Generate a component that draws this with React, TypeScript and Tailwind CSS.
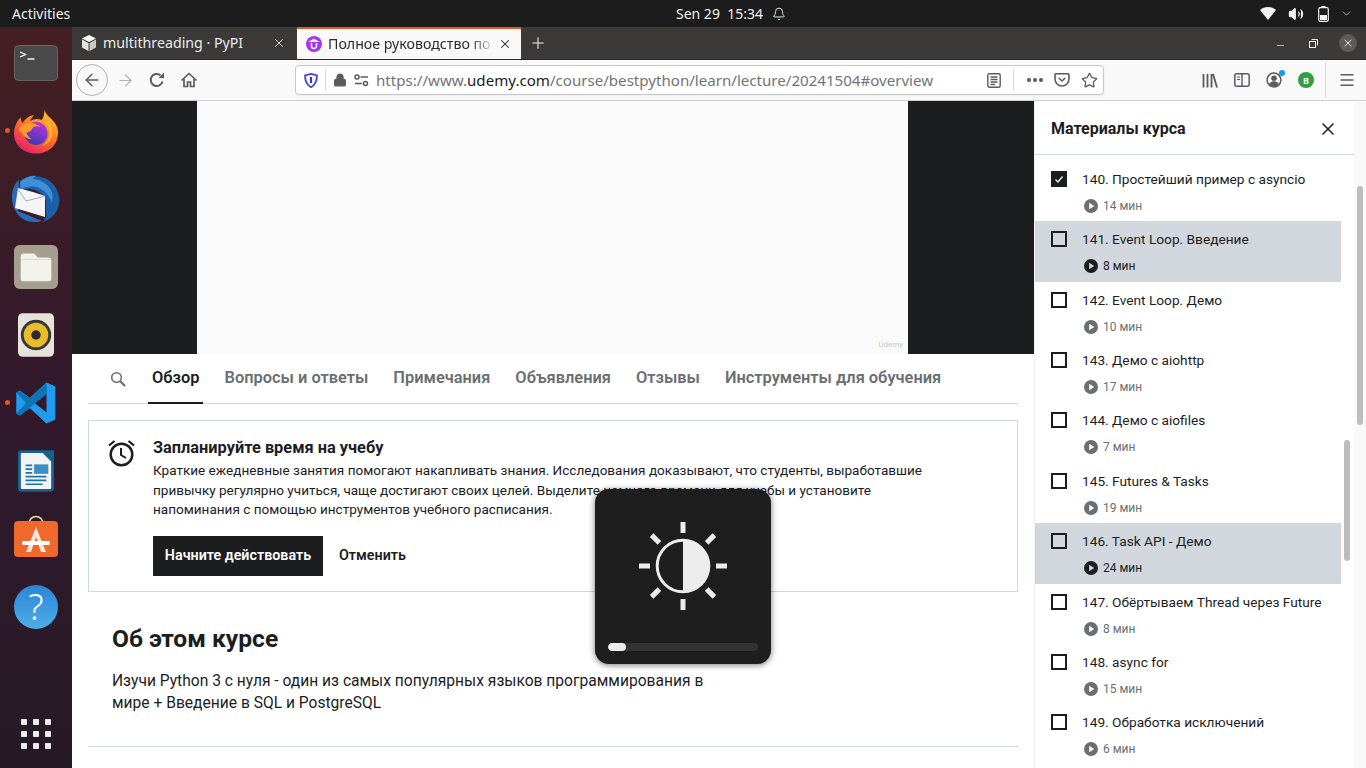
import * as React from 'react';
import { ArrowLeft, ArrowRight, Lock, Plus, X, Star, Menu, Bell, Volume2, ChevronDown, Minus } from 'lucide-react';

const lectures = [
  { title: '140. Простейший пример с asyncio', time: '14 мин', done: true },
  { title: '141. Event Loop. Введение', time: '8 мин', active: true },
  { title: '142. Event Loop. Демо', time: '10 мин' },
  { title: '143. Демо с aiohttp', time: '17 мин' },
  { title: '144. Демо с aiofiles', time: '7 мин' },
  { title: '145. Futures & Tasks', time: '19 мин' },
  { title: '146. Task API - Демо', time: '24 мин', active: true },
  { title: '147. Обёртываем Thread через Future', time: '8 мин' },
  { title: '148. async for', time: '15 мин' },
  { title: '149. Обработка исключений', time: '6 мин' },
];

const tabs = ['Обзор', 'Вопросы и ответы', 'Примечания', 'Объявления', 'Отзывы', 'Инструменты для обучения'];

const PlayDot: React.FC<{ active?: boolean }> = ({ active }) => (
  <svg width="14" height="14" viewBox="0 0 14 14" className="ml-[2px]">
    <circle cx="7" cy="7" r="7" fill={active ? '#1c1d1f' : '#6a6f73'} />
    <path d="M5.2 3.8 10.2 7 5.2 10.2Z" fill={active ? '#d1d7dc' : '#fff'} />
  </svg>
);

const LectureRow: React.FC<{ title: string; time: string; done?: boolean; active?: boolean }> = ({ title, time, done, active }) => (
  <div className={`h-[60.36px] w-[306px] pl-4 pr-2 flex gap-[15px] ${active ? 'bg-[#d1d7dc]' : ''}`}>
    <div className={`mt-[10px] w-4 h-4 shrink-0 border-2 border-[#1c1d1f] flex items-center justify-center ${done ? 'bg-[#1c1d1f]' : ''}`}>
      {done && (
        <svg width="10" height="10" viewBox="0 0 10 10" fill="none" stroke="#fff" strokeWidth="1.2">
          <path d="M1.5 5.5 4 8 8.5 2.5" />
        </svg>
      )}
    </div>
    <div>
      <div className="mt-[8px] text-[13.7px] leading-[20px] text-[#1c1d1f] whitespace-nowrap">{title}</div>
      <div className={`mt-[9px] flex items-center gap-[5px] text-[12px] leading-[16px] ${active ? 'text-[#1c1d1f]' : 'text-[#6a6f73]'}`}>
        <PlayDot active={active} />
        {time}
      </div>
    </div>
  </div>
);

const DockSlot: React.FC<{ dot?: boolean; children: React.ReactNode }> = ({ dot, children }) => (
  <div className="relative w-[72px] h-[68px] shrink-0 flex items-center justify-center">
    {dot && <div className="absolute left-[5px] top-1/2 -mt-[3px] w-[5px] h-[5px] rounded-full bg-[#e95420]" />}
    {children}
  </div>
);

const Dock: React.FC = () => (
  <aside className="w-[72px] shrink-0 flex flex-col items-center bg-gradient-to-b from-[#451f22] via-[#32192c] to-[#261a26]">
    <div className="h-[2px]" />
    <DockSlot>
      <svg width="44" height="36" viewBox="0 0 44 36">
        <rect x="0.5" y="0.5" width="43" height="35" rx="4" fill="#4a4a4a" stroke="#666" />
        <path d="M6 7 11.5 9.5 6 12" fill="none" stroke="#fff" strokeWidth="1.3" />
        <path d="M13.5 14H20.5" stroke="#fff" strokeWidth="1.4" />
      </svg>
    </DockSlot>
    <DockSlot dot>
      <svg width="46" height="47" viewBox="0 0 48 48">
        <defs>
          <linearGradient id="fx1" x1="0.8" y1="0" x2="0.2" y2="1">
            <stop offset="0" stopColor="#ffd02e" />
            <stop offset="0.45" stopColor="#ff7a1f" />
            <stop offset="1" stopColor="#e3176e" />
          </linearGradient>
          <linearGradient id="fx2" x1="0.7" y1="0" x2="0.3" y2="1">
            <stop offset="0" stopColor="#b833e1" />
            <stop offset="1" stopColor="#3a3bb3" />
          </linearGradient>
        </defs>
        <path d="M33 1c1 5 4 7 7 10 5 5 7 9 7 14 0 13-10 22-23 22S1 38 1 26C1 18 5 12 8 9c0 3 1 5 2 6 3-5 8-8 12-8-3 3-4 5-4 6 3-2 8-3 12-1 2-3 3-7 3-12Z" fill="url(#fx1)" />
        <circle cx="24" cy="26" r="12" fill="url(#fx2)" />
        <path d="M6 21c4-5 10-7 14-6 5 1 9 4 9 4-3-1-8-1-9 2-1 2-4 4-6 4 1 3 3 6 6 7-6 0-11-5-14-11Z" fill="#ff9a2a" />
        <path d="M31 13c5 3 8 9 7 15-1 5-4 9-8 11 6-1 11-7 11-14 0-5-2-9-4-11Z" fill="#ffb52e" />
      </svg>
    </DockSlot>
    <DockSlot>
      <svg width="48" height="48" viewBox="0 0 48 48">
        <path d="M8 6C16-1 33-1 42 10c8 10 7 27-5 34-2 1-4 2-6 3 5-6 6-18 1-25C26 14 16 12 9 16 7 13 7 9 8 6Z" fill="#1d5fa8" />
        <path d="M9 6c5-4 11-6 15-5-2 1-3 2-3 3 6 0 14 4 18 11 2 5 2 9 1 13-2-7-7-12-13-15-5-2-12-2-17 1-2-2-2-5-1-8Z" fill="#3f8fdb" />
        <path d="M0 22C0 14 3 8 7 5c-1 6 0 11 2 14L6 36l24 10c-3 1-5 1-8 1C9 47 0 36 0 22Z" fill="#2a6cbc" />
        <path d="M6 13 21 17 33 21 33 42 3 33Z" fill="#f5f5f8" />
        <path d="M6 14 14 26 33 21" fill="none" stroke="#9aa3ad" strokeWidth="0.9" />
        <path d="M34 25l5-1-3 4 5 0-4 4 4 1-5 3 2 2-4 2Z" fill="#1d5fa8" />
      </svg>
    </DockSlot>
    <DockSlot>
      <svg width="44" height="44" viewBox="0 0 46 46">
        <rect width="46" height="46" rx="6" fill="#a59e8e" />
        <path d="M7 12a3 3 0 0 1 3-3h11l4 4h11a3 3 0 0 1 3 3v19a3 3 0 0 1-3 3H10a3 3 0 0 1-3-3Z" fill="#f3f1ec" />
        <path d="M7 15h32" stroke="#d8d4ca" strokeWidth="1" />
      </svg>
    </DockSlot>
    <DockSlot>
      <svg width="36" height="44" viewBox="0 0 38 46">
        <rect width="38" height="46" rx="5" fill="#e6e3da" />
        <circle cx="19" cy="23" r="16" fill="#37373a" />
        <circle cx="19" cy="23" r="13" fill="#e9bd27" />
        <circle cx="19" cy="23" r="5" fill="#2b2b2d" />
      </svg>
    </DockSlot>
    <DockSlot dot>
      <svg width="42" height="42" viewBox="0 0 100 100">
        <path d="M96 11 75 1 35 38 12 20 3 25v50l9 5 23-18 40 37 21-10ZM75 28v44L46 50Z" fill="#1f9cf0" />
        <path d="M3 25 12 20 35 38 75 1 76 28 12 80 3 75 26 50Z" fill="#0f73b8" />
      </svg>
    </DockSlot>
    <DockSlot>
      <svg width="36" height="44" viewBox="0 0 38 46">
        <path d="M3 1h24l11 11v29a4 4 0 0 1-4 4H4a4 4 0 0 1-4-4V4a3 3 0 0 1 3-3Z" fill="#19618f" />
        <path d="M4 4h22l9 9v28a1 1 0 0 1-1 1H4a1 1 0 0 1-1-1V5a1 1 0 0 1 1-1Z" fill="#f4f4f4" />
        <path d="M27 1 38 1V12Z" fill="#19618f" />
        <rect x="17" y="16" width="15" height="10" fill="#3b8ec4" />
        <path d="M8 17h7M8 21h7M8 25h7M8 29h22M8 33h22M8 37h18" stroke="#1a75a8" strokeWidth="1.8" />
      </svg>
    </DockSlot>
    <DockSlot>
      <svg width="44" height="43" viewBox="0 0 44 43" className="-mt-[5px]">
        <path d="M15 9c0-10 14-10 14 0" fill="none" stroke="#f7d3a8" strokeWidth="1.6" />
        <rect y="6" width="44" height="36" rx="4" fill="#f0682c" />
        <path d="M22 12 32 37h-5l-5-15-5 15h-5Z" fill="#fde5d8" />
        <rect x="8" y="26" width="28" height="4" rx="1.5" fill="#fff" />
      </svg>
    </DockSlot>
    <DockSlot>
      <div className="w-[44px] h-[44px] rounded-full bg-gradient-to-b from-[#2a86d8] to-[#4eaee8] flex items-center justify-center text-white text-[36px] leading-none font-light font-['Noto_Sans',sans-serif]">?</div>
    </DockSlot>
    <div className="flex-1" />
    <div className="mb-[19px] grid grid-cols-3 gap-[6px]">
      {Array.from({ length: 9 }).map((_, i) => (
        <div key={i} className="w-[6px] h-[6px] rounded-[1px] bg-[#ececec]" />
      ))}
    </div>
  </aside>
);

const TopBar: React.FC = () => (
  <header className="h-[27px] shrink-0 bg-[#1c1c1c] text-[#f0f0f0] flex items-center pl-3 pr-[13px] text-[14px] font-['Noto_Sans',sans-serif]">
    <span className="w-[664px] shrink-0">Activities</span>
    <div className="flex items-center gap-[9px]">
      <span>Sen 29&nbsp;&nbsp;15:34</span>
      <Bell size={14} strokeWidth={1.6} />
    </div>
    <div className="flex-1 flex items-center justify-end">
      <svg width="16" height="13" viewBox="0 0 16 13"><path d="M0 3C2 1 5 0 8 0s6 1 8 3L8 13Z" fill="#f2f2f2" /></svg>
      <Volume2 size={16} fill="#f2f2f2" strokeWidth={1.6} className="ml-[12px]" />
      <svg className="ml-[14px]" width="11" height="16" viewBox="0 0 11 16">
        <rect x="0.7" y="1.7" width="9.6" height="13.6" rx="1.5" fill="none" stroke="#f2f2f2" strokeWidth="1.2" />
        <rect x="3.5" y="0" width="4" height="1.5" fill="#f2f2f2" />
        <rect x="2" y="9" width="7" height="5" fill="#f2f2f2" />
      </svg>
      <ChevronDown className="ml-[11px]" size={13} strokeWidth={1.2} />
    </div>
  </header>
);

const TabStrip: React.FC = () => (
  <div className="h-[33px] shrink-0 bg-[#3b3a38] flex items-stretch font-['Noto_Sans',sans-serif] text-[14.2px] border-b border-[#2a2a2a]">
    <div className="w-[225px] flex items-center pl-[9px] pr-[11px] text-[#ececec]">
      <svg width="16" height="16" viewBox="0 0 16 16" className="mr-[6px]">
        <path d="M8 0 15 3.5 8 7 1 3.5Z" fill="#fff" />
        <path d="M1 4.5 7.5 8v8L1 12.5Z" fill="#e4e4e4" />
        <path d="M15 4.5 8.5 8v8l6.5-3.5Z" fill="#c9c9c9" />
      </svg>
      <span className="flex-1 whitespace-nowrap">multithreading · PyPI</span>
      <X size={14} strokeWidth={1.5} />
    </div>
    <div className="w-[224px] bg-[#f9f9fa] border-t-2 border-[#e95420] flex items-center pl-[9px] pr-[9px] text-[#2a2a2e]">
      <svg width="16" height="16" viewBox="0 0 16 16" className="mr-[6px] shrink-0">
        <circle cx="8" cy="8" r="8" fill="#a435f0" />
        <path d="M5.5 7v3a2.5 2.5 0 0 0 5 0V7M8 3.5 5 5.2h6Z" fill="none" stroke="#fff" strokeWidth="1.5" />
      </svg>
      <span className="flex-1 overflow-hidden whitespace-nowrap [mask-image:linear-gradient(to_right,black_85%,transparent)]">Полное руководство по</span>
      <X size={14} strokeWidth={1.8} className="ml-[3px] shrink-0" />
    </div>
    <div className="w-[34px] flex items-center justify-center text-[#ececec]">
      <Plus size={18} strokeWidth={1.5} />
    </div>
    <div className="flex-1" />
    <div className="flex items-center gap-[19px] pr-[9px] text-[#f0f0f0]">
      <Minus size={11} strokeWidth={1.5} className="mr-[4px] mt-[5px]" />
      <svg width="9" height="9" viewBox="0 0 9 9" fill="none" stroke="#f0f0f0">
        <rect x="0.5" y="2.5" width="6" height="6" />
        <path d="M2.5 0.5h6v6" />
      </svg>
      <div className="w-[18px] h-[18px] ml-[2px] rounded-full bg-[#5c5c5c] flex items-center justify-center">
        <X size={12} strokeWidth={1.8} />
      </div>
    </div>
  </div>
);

const Toolbar: React.FC = () => (
  <div className="h-[41px] shrink-0 bg-[#f9f9fa] border-b border-[#cfcfd2] flex items-center text-[#5b5b5f] font-['Noto_Sans',sans-serif]">
    <div className="ml-[4px] w-[32px] h-[32px] rounded-full border border-[#b1b1b3] flex items-center justify-center">
      <ArrowLeft size={20} strokeWidth={1.7} />
    </div>
    <ArrowRight size={19} strokeWidth={1.5} className="ml-[8px] text-[#b4b4b6]" />
    <svg width="16" height="16" viewBox="0 0 16 16" fill="none" stroke="#5b5b5f" strokeWidth="2" className="ml-[14px]">
      <path d="M13.5 9.5A6 6 0 1 1 11.5 3.3" />
      <path d="M15 0.5V6H9.5Z" fill="#5b5b5f" stroke="none" />
    </svg>
    <svg width="16" height="16" viewBox="0 0 16 16" fill="none" stroke="#5b5b5f" strokeWidth="1.7" className="ml-[16px]">
      <path d="M1 8 8 1.5 15 8" strokeLinecap="round" strokeLinejoin="round" />
      <path d="M3 7V14.5H6.5V10H9.5V14.5H13V7" />
    </svg>
    <div className="ml-[98px] w-[809px] h-[30px] bg-white border border-[#c8c8cb] rounded-[4px] flex items-center shadow-[0_1px_2px_rgba(0,0,0,0.06)]">
      <svg width="14" height="15" viewBox="0 0 14 15" className="ml-[8px]">
        <path d="M7 0.8 13 2.5C13 8 11 12 7 14.2 3 12 1 8 1 2.5Z" fill="#f4f4ff" stroke="#4a4ad6" strokeWidth="1.8" />
        <path d="M7 4V10" stroke="#3a3ab0" strokeWidth="2" />
      </svg>
      <div className="ml-[7px] w-px h-[22px] bg-[#d7d7db]" />
      <Lock size={14} strokeWidth={2.4} fill="#5b5b5f" className="ml-[7px]" />
      <svg width="15" height="13" viewBox="0 0 15 13" className="ml-[7px]" fill="none" stroke="#5b5b5f" strokeWidth="1.5">
        <circle cx="3" cy="3" r="2" />
        <path d="M6.5 3H14M1 9.5H8" />
        <circle cx="11.5" cy="9.5" r="2" />
      </svg>
      <div className="ml-[7px] flex-1 text-[15.1px] text-[#737377] whitespace-nowrap overflow-hidden">
        https://www.<span className="text-[#1c1c20]">udemy.com</span>/course/bestpython/learn/lecture/20241504#overview
      </div>
      <svg width="14" height="15" viewBox="0 0 14 15" fill="none" stroke="#5b5b5f" strokeWidth="1.4">
        <rect x="0.8" y="0.8" width="12.4" height="13.4" rx="1.5" />
        <path d="M3.5 4H10.5M3.5 6.5H10.5M3.5 9H10.5M3.5 11.5H8" />
      </svg>
      <div className="ml-[12px] w-px h-[22px] bg-[#d7d7db]" />
      <div className="ml-[13px] flex gap-[2px]">
        <span className="w-[4px] h-[4px] rounded-full bg-[#5b5b5f]" />
        <span className="w-[4px] h-[4px] rounded-full bg-[#5b5b5f]" />
        <span className="w-[4px] h-[4px] rounded-full bg-[#5b5b5f]" />
      </div>
      <svg width="16" height="14" viewBox="0 0 16 14" fill="none" stroke="#5b5b5f" strokeWidth="1.6" className="ml-[11px]">
        <path d="M1 1.8a1 1 0 0 1 1-1h12a1 1 0 0 1 1 1V6a7 7 0 0 1-14 0Z" />
        <path d="M4.8 5 8 8l3.2-3" />
      </svg>
      <Star size={17} strokeWidth={1.8} className="ml-[11px] mr-[5px]" />
    </div>
    <div className="flex-1" />
    <div className="flex items-center">
      <svg width="16" height="15" viewBox="0 0 16 15" stroke="#5b5b5f" strokeWidth="1.8" fill="none">
        <path d="M1.5 1V14.5M5.5 1V14.5M9.5 1V14.5M11 1l4 13.5" />
      </svg>
      <svg width="16" height="14" viewBox="0 0 16 14" fill="none" stroke="#5b5b5f" strokeWidth="1.5" className="ml-[16px]">
        <rect x="0.8" y="0.8" width="14.4" height="12.4" rx="2" />
        <path d="M8 1V13" strokeWidth="1.4" />
        <path d="M3 4H6M3 6.5H6" strokeWidth="1.2" />
      </svg>
      <div className="relative ml-[16px]">
        <svg width="16" height="16" viewBox="0 0 15 15">
          <circle cx="7.5" cy="7.5" r="6.5" fill="none" stroke="#5b5b5f" strokeWidth="1.4" />
          <circle cx="7.5" cy="5.8" r="2.6" fill="#5b5b5f" />
          <path d="M3 11.5c1-2 2.5-2.8 4.5-2.8s3.5 0.8 4.5 2.8a6 6 0 0 1-9 0Z" fill="#5b5b5f" />
        </svg>
        <span className="absolute -top-[2px] -right-[3px] w-[6px] h-[6px] rounded-full bg-[#0a9dff]" />
      </div>
      <div className="ml-[16px] w-4 h-4 rounded-full bg-[#2ea043] flex items-center justify-center text-white text-[9px] leading-none font-bold">B</div>
      <div className="ml-[11px] w-px h-[34px] bg-[#d7d7db]" />
      <Menu size={18} strokeWidth={1.8} className="ml-[12px] mr-[10px]" />
    </div>
  </div>
);

const MainContent: React.FC = () => (
  <main className="w-[962px] shrink-0 bg-white text-[#1c1d1f] overflow-hidden">
    <div className="h-[253px] bg-[#1c1d1f] pl-[125px]">
      <div className="relative w-[711px] h-full bg-[#fafafa]">
        <span className="absolute right-[5px] bottom-[3px] text-[8px] text-[#c8c8c8]">Udemy</span>
      </div>
    </div>
    <div className="mx-4 h-[50px] border-b border-[#d1d7dc] flex items-stretch">
      <div className="w-[60px] flex items-center pl-[22px]">
        <svg width="16" height="16" viewBox="0 0 16 16" fill="none" stroke="#6a6f73">
          <circle cx="6.5" cy="6.5" r="4.8" strokeWidth="1.6" />
          <path d="M10.2 10.2 15 15" strokeWidth="2.2" />
        </svg>
      </div>
      <div className="flex items-stretch gap-[17px]">
        {tabs.map((t, i) => (
          <div key={t} className={`px-1 pt-[1px] flex items-center text-[16.4px] font-semibold whitespace-nowrap border-b-2 -mb-px ${i === 0 ? 'text-[#1c1d1f] border-[#1c1d1f]' : 'text-[#6a6f73] border-transparent'}`}>
            {t}
          </div>
        ))}
      </div>
    </div>
    <div className="mx-4 mt-4 h-[172px] border border-[#d1d7dc] flex pl-[19px] pt-[18px]">
      <svg width="27" height="28" viewBox="0 0 27 28" fill="none" stroke="#1c1d1f" className="shrink-0">
        <circle cx="13.5" cy="15.5" r="10.8" strokeWidth="2.5" />
        <path d="M13 9V16L18 19" strokeWidth="2" />
        <path d="M1 6.5 6.5 2M26 6.5 20.5 2" strokeWidth="2.2" />
      </svg>
      <div className="ml-[18px]">
        <div className="-mt-px text-[16.35px] leading-[19px] font-bold">Запланируйте время на учебу</div>
        <p className="mt-[4px] text-[13.55px] leading-[19.6px] w-[800px]">
          Краткие ежедневные занятия помогают накапливать знания. Исследования доказывают, что студенты, выработавшие привычку регулярно учиться, чаще достигают своих целей. Выделите немного времени для учебы и установите напоминания с помощью инструментов учебного расписания.
        </p>
        <div className="mt-[16px] flex items-center">
          <div className="h-10 w-[170px] bg-[#1c1d1f] text-white text-[14.3px] font-semibold flex items-center justify-center whitespace-nowrap">Начните действовать</div>
          <div className="ml-4 text-[14.3px] font-semibold">Отменить</div>
        </div>
      </div>
    </div>
    <div className="mx-4 h-[155px] border-b border-[#d1d7dc] pl-[24px] pt-[31px]">
      <h2 className="text-[24.6px] leading-[32px] font-bold">Об этом курсе</h2>
      <p className="mt-[15px] text-[15.6px] leading-[22px] w-[610px]">Изучи Python 3 с нуля - один из самых популярных языков программирования в мире + Введение в SQL и PostgreSQL</p>
    </div>
  </main>
);

const CoursePanel: React.FC = () => (
  <aside className="relative flex-1 flex bg-[#f9f9f9] text-[#1c1d1f] overflow-hidden">
    <div className="w-[320px] shrink-0 bg-white border-l border-[#f0f0f0]">
      <div className="h-[54px] pt-[2px] border-b border-[#d1d7dc] flex items-center justify-between pl-[16px] pr-[16px]">
        <span className="text-[16px] font-bold">Материалы курса</span>
        <X size={20} strokeWidth={1.8} />
      </div>
      <div className="pt-[6px]">
        {lectures.map((l) => (
          <LectureRow key={l.title} {...l} />
        ))}
      </div>
    </div>
    <div className="absolute left-[310px] top-[339px] w-[6px] h-[121px] rounded-full bg-[#bdbdbd]" />
    <div className="absolute left-[323px] top-[85px] w-[6px] h-[239px] rounded-full bg-[#bdbdbd]" />
  </aside>
);

const BrightnessOsd: React.FC = () => (
  <div className="absolute left-[595px] top-[489px] w-[176px] h-[175px] rounded-[14px] bg-[#1e1e1e] shadow-[0_1px_6px_rgba(0,0,0,0.55)] flex flex-col items-center">
    <svg width="88" height="88" viewBox="0 0 88 88" className="mt-[33px]" fill="#ececec">
      <rect x="41.5" y="0" width="5" height="11" />
      <rect x="41.5" y="77" width="5" height="11" />
      <rect x="0" y="41.5" width="11" height="5" />
      <rect x="77" y="41.5" width="11" height="5" />
      <rect x="11" y="14.5" width="11" height="5" transform="rotate(45 16.5 17)" />
      <rect x="66" y="14.5" width="11" height="5" transform="rotate(-45 71.5 17)" />
      <rect x="11" y="68.5" width="11" height="5" transform="rotate(-45 16.5 71)" />
      <rect x="66" y="68.5" width="11" height="5" transform="rotate(45 71.5 71)" />
      <circle cx="44" cy="44" r="25.8" fill="none" stroke="#ececec" strokeWidth="3" />
      <path d="M44 18.2a25.8 25.8 0 0 1 0 51.6Z" />
    </svg>
    <div className="mt-[33px] w-[150px] h-2 rounded-full bg-[#323232] overflow-hidden">
      <div className="h-full w-[18px] rounded-full bg-[#ececec]" />
    </div>
  </div>
);

export default function App() {
  return (
    <div className="relative w-[1366px] h-[768px] overflow-hidden flex flex-col font-['Roboto',sans-serif]">
      <TopBar />
      <div className="flex-1 flex min-h-0">
        <Dock />
        <div className="relative flex-1 flex flex-col min-w-0">
          <TabStrip />
          <Toolbar />
          <div className="flex-1 flex min-h-0">
            <MainContent />
            <CoursePanel />
          </div>
        </div>
      </div>
      <BrightnessOsd />
    </div>
  );
}
